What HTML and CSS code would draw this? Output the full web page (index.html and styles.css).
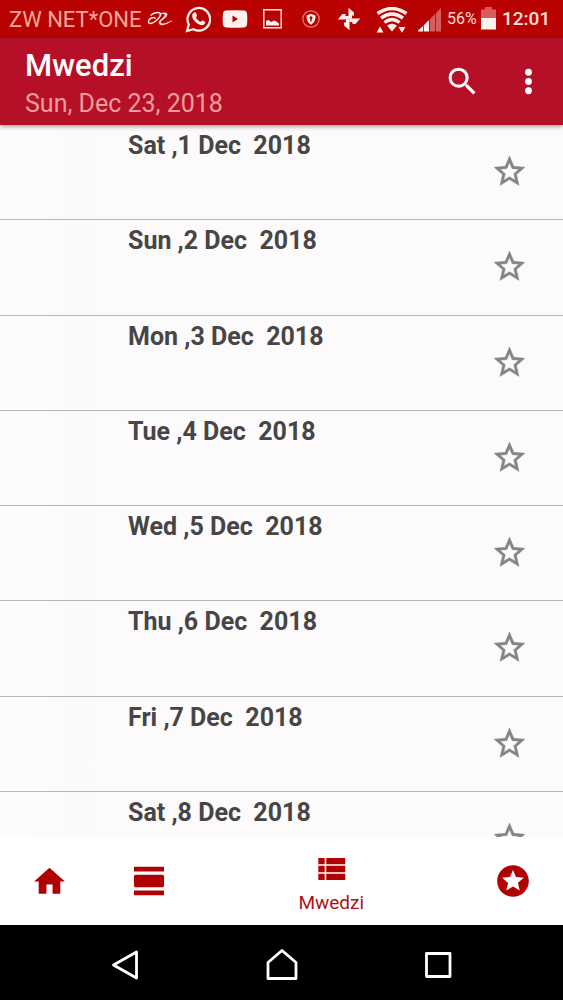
FILE: index.html
```html
<!DOCTYPE html>
<html lang="sn">
<head>
    <meta charset="UTF-8">
    <meta name="viewport" content="width=device-width, initial-scale=1.0">
    <title>Mwedzi</title>
    <link rel="stylesheet" href="styles.css">
</head>
<body>
    <div class="status-bar">
        <span class="carrier">ZW NET*ONE</span>
        <svg class="icon-alibaba" width="26" height="16" viewBox="0 0 26 16">
            <path d="M3.500 4.500C8 .5 14.500.5 13.500 4C12.500 7.500 7 12.500 3.500 12.500C0 12.500 1.500 8 4.500 7C6.500 6.300 8.500 6.500 8 8" fill="none" stroke="currentColor" stroke-width="1.400"/>
            <path d="M12.500 3.500C16 1 21 1 20 4.200C19 7.500 13.500 9 13.500 11.500C14 14 20 12.500 25 9.500C20 13.800 12.500 15.500 12 12C12 9 17 7 17.800 4.300C18.200 2.500 15 2.500 12.500 3.500Z" fill="currentColor" stroke="currentColor" stroke-width=".4"/>
        </svg>
        <svg class="icon-whatsapp" width="26" height="28" viewBox="0 0 26 28">
            <path d="M2 26L3.800 19.500A11.300 11.300 0 1 1 8.400 24.200Z" fill="none" stroke="currentColor" stroke-width="2.200"/>
            <path d="M8.500 8C9.500 7 10.500 7 11 8L12 10.300C12.200 11 11 12 11 12.500C12 14.500 13.500 16 15.300 16.800C16 17 16.800 15.300 17.500 15.500L20 16.700C20.500 17 20 18.600 19.300 19.300C17.500 21 14.500 20 12 18.300C9.500 16.500 7.500 13.500 7.200 11.500C7 10 7.500 8.800 8.500 8Z" fill="currentColor"/>
        </svg>
        <svg class="icon-video" width="26" height="18" viewBox="0 0 26 18">
            <path fill-rule="evenodd" d="M4 .6Q13-.2 22 .6Q24.800.8 25.100 4Q25.500 9 25.100 14Q24.800 17.200 22 17.400Q13 18.200 4 17.400Q1.200 17.200.9 14Q.5 9 .9 4Q1.200.8 4 .6ZM10.500 5.500V12.500L16 9Z" fill="currentColor"/>
        </svg>
        <svg class="icon-picture" width="19" height="20" viewBox="0 0 19 20">
            <rect x=".8" y=".8" width="17.400" height="18" fill="none" stroke="currentColor" stroke-width="1.400"/>
            <path d="M3 16.500V12L5.500 11L8 13L11 11.500L13.500 12.500L16 14.500V16.500Z" fill="currentColor"/>
        </svg>
        <svg class="icon-shield" width="18" height="18" viewBox="0 0 18 18">
            <circle cx="9" cy="9" r="8.200" fill="none" stroke="#ef7a70" stroke-width="1.200"/>
            <path d="M9 3.800L13.500 5.500C13.700 9.500 12.500 12.500 9 14.700C5.500 12.500 4.300 9.500 4.500 5.500Z" fill="currentColor"/>
            <path d="M9 6.300A1.600 1.600 0 0 1 9.700 9.300V11.500H8.300V9.300A1.600 1.600 0 0 1 9 6.300Z" fill="#b90303"/>
        </svg>
        <svg class="icon-pinwheel" width="24" height="24" viewBox="0 0 24 24">
            <g fill="currentColor">
                <path d="M11.500 11.800V.8L17 5.500V8.500H15V11.800Z"/>
                <path d="M11.500 11.800V.8L17 5.500V8.500H15V11.800Z" transform="rotate(90 12 12)"/>
                <path d="M11.500 11.800V.8L17 5.500V8.500H15V11.800Z" transform="rotate(180 12 12)"/>
                <path d="M11.500 11.800V.8L17 5.500V8.500H15V11.800Z" transform="rotate(270 12 12)"/>
            </g>
        </svg>
        <svg class="icon-wifi" width="32" height="26" viewBox="0 0 32 26">
            <g fill="none" stroke="currentColor" stroke-width="3.400">
                <path d="M1.500 6.500Q16-3.500 30.500 6.500"/>
                <path d="M5 11Q16 3.200 27 11"/>
                <path d="M8.500 15.500Q16 9.700 23.500 15.500"/>
            </g>
            <path d="M11 18.500Q16 15 21 18.500L16 24.500ZM.5 25.500L4 19.500L7.500 25.500ZM22.500 20H29.500L26 25.800Z" fill="currentColor"/>
        </svg>
        <svg class="icon-signal" width="24" height="24" viewBox="0 0 24 24">
            <path d="M0 23.500V22.500L5 18V23.500ZM5.800 23.500V17.200L11 12V23.500Z" fill="currentColor"/>
            <path d="M11.800 23.500V11.200L17 6V23.500ZM17.800 23.500V5.200L23 0V23.500Z" fill="#d95c5c"/>
        </svg>
        <span class="percent">56%</span>
        <svg class="icon-battery" width="15" height="23" viewBox="0 0 15 23">
            <path d="M0 2.500H4V0H11V2.500H15V11H0Z" fill="#d95c5c"/>
            <path d="M0 11H15V22.500H0Z" fill="currentColor"/>
        </svg>
        <span class="clock">12:01</span>
    </div>

    <header>
        <div class="titles">
            <h1>Mwedzi</h1>
            <p>Sun, Dec 23, 2018</p>
        </div>
        <svg class="search" width="37" height="37" viewBox="0 0 24 24">
            <path d="M15.500 14h-.79l-.28-.27A6.471 6.471 0 0 0 16 9.500 6.500 6.500 0 1 0 9.500 16c1.610 0 3.090-.59 4.230-1.570l.27.28v.79l5 4.990L20.490 19l-4.990-5zm-6 0C7.010 14 5 11.990 5 9.500S7.010 5 9.500 5 14 7.010 14 9.500 11.990 14 9.500 14z"/>
        </svg>
        <svg class="more" width="37" height="37" viewBox="0 0 24 24">
            <circle cx="12" cy="6" r="2.200"/>
            <circle cx="12" cy="12" r="2.200"/>
            <circle cx="12" cy="18" r="2.200"/>
        </svg>
    </header>

    <main id="days" class="days"></main>

    <nav class="tabs">
        <a>
            <svg width="37" height="37" viewBox="0 0 24 24"><path d="M10 20v-6h4v6h5v-8h3L12 3 2 12h3v8z"/></svg>
        </a>
        <a>
            <svg width="38" height="38" viewBox="0 0 24 24"><path d="M2.500 21h19v-3h-19zM20.500 8h-17c-.55 0-1 .45-1 1v6c0 .55.45 1 1 1h17c.55 0 1-.45 1-1V9c0-.55-.45-1-1-1zM2.500 3v3h19V3z"/></svg>
        </a>
        <a class="active">
            <svg width="38" height="38" viewBox="0 0 24 24"><path d="M4 14h4v-4H4v4zm0 5h4v-4H4v4zm0-10h4V5H4v4zm5 5h12v-4H9v4zm0 5h12v-4H9v4zM9 5v4h12V5H9z"/></svg>
            <span>Mwedzi</span>
        </a>
        <a>
            <svg width="38" height="38" viewBox="0 0 24 24"><path d="M11.990 2C6.470 2 2 6.480 2 12s4.470 10 9.990 10C17.520 22 22 17.520 22 12S17.520 2 11.990 2zm4.240 16L12 15.450 7.770 18l1.120-4.810-3.730-3.230 4.920-.42L12 5l1.920 4.530 4.920.42-3.730 3.230L16.230 18z"/></svg>
        </a>
    </nav>

    <div class="system-nav">
        <svg width="32" height="32" viewBox="0 0 32 32"><path d="M4.500 16L27.500 3V29Z"/></svg>
        <svg width="32" height="32" viewBox="0 0 32 32"><path d="M2 13.500L16 1.500L30 13.500V29.500H2Z"/></svg>
        <svg width="32" height="32" viewBox="0 0 32 32"><path d="M4.500 4.500H28V27.500H4.500Z"/></svg>
    </div>

    <script>
        const dias = ["Sat", "Sun", "Mon", "Tue", "Wed", "Thu", "Fri", "Sat"];
        const lista = document.getElementById("days");

        dias.forEach((dia, index) => {
            const div = document.createElement("div");
            div.classList.add("day");
            div.innerHTML = `
                <h2>${dia} ,${index + 1} Dec  2018</h2>
                <svg width="37" height="37" viewBox="0 0 24 24">
                    <path d="M22 9.240l-7.190-.62L12 2 9.190 8.630 2 9.240l5.460 4.730L5.820 21 12 17.270 18.180 21l-1.630-7.030L22 9.240zM12 15.400l-3.760 2.270 1-4.280-3.320-2.880 4.380-.38L12 6.100l1.710 4.040 4.380.38-3.320 2.880 1 4.280L12 15.400z"/>
                </svg>
            `;
            lista.appendChild(div);
        });
    </script>
</body>
</html>
```
FILE: styles.css
```css
* {
    box-sizing: border-box;
}
body {
    font-family: Roboto, "Noto Sans", sans-serif;
    margin: 0;
    height: 1000px;
    display: flex;
    flex-direction: column;
    overflow: hidden;
    background-color: #fcfafb;
}
h1, h2, p {
    margin: 0;
}
svg {
    display: block;
    flex-shrink: 0;
}

/* Status bar */
.status-bar {
    height: 38px;
    flex-shrink: 0;
    display: flex;
    align-items: flex-start;
    padding-left: 9px;
    background-color: #b90303;
    color: #fff1ee;
    white-space: nowrap;
}
.carrier {
    width: 138px;
    font-size: 22px;
    line-height: 26px;
    margin-top: 7px;
    color: #f7a79c;
}
.icon-alibaba {
    margin-top: 11px;
}
.icon-whatsapp {
    margin: 5px 0 0 12px;
}
.icon-video {
    margin: 10px 0 0 11px;
}
.icon-picture {
    margin: 9px 0 0 15px;
}
.icon-shield {
    margin: 10px 0 0 20px;
}
.icon-pinwheel {
    margin: 7px 0 0 17px;
}
.icon-wifi {
    margin: 7px 0 0 15px;
}
.icon-signal {
    margin: 8px 0 0 10px;
}
.percent {
    width: 34px;
    margin: 9px 0 0 5px;
    font-size: 16px;
    line-height: 20px;
    color: #ffd9d4;
}
.icon-battery {
    margin-top: 7px;
}
.clock {
    margin: 7px 0 0 6px;
    font-size: 19px;
    font-weight: 500;
    line-height: 24px;
    color: #ffe0dc;
}

/* App bar */
header {
    position: relative;
    height: 87px;
    flex-shrink: 0;
    display: flex;
    align-items: center;
    padding: 0 16px 0 25px;
    background-color: #b51027;
    box-shadow: 0 1px 5px rgba(0, 0, 0, 0.45);
    fill: #fff;
}
.titles {
    flex: 1;
    padding-top: 6px;
    white-space: nowrap;
}
h1 {
    font-size: 31px;
    font-weight: 500;
    line-height: 38px;
    color: #fff;
}
header p {
    font-size: 25px;
    line-height: 37px;
    color: #f19c9c;
}
.search {
    margin-right: 29px;
}

/* Day list */
.days {
    flex: 1;
    min-height: 0;
    overflow: hidden;
    background: linear-gradient(to right, #fbfdfb, #fcfafb 90px);
}
.day {
    height: 95.25px;
    display: flex;
    justify-content: space-between;
    padding: 0 35px 0 128px;
    border-bottom: 1px solid #b9b7b8;
}
.day h2 {
    font-size: 25px;
    font-weight: bold;
    line-height: 30px;
    margin-top: 6px;
    color: #474546;
    white-space: pre;
}
.day svg {
    margin-top: 28px;
    fill: #858384;
    stroke: #858384;
    stroke-width: 0.3;
}

/* Bottom tabs */
.tabs {
    height: 88px;
    flex-shrink: 0;
    display: grid;
    grid-template-columns: 99.5px 99.5px 1fr 99.5px;
    background-color: #fff;
    fill: #b00004;
}
.tabs a {
    display: flex;
    flex-direction: column;
    align-items: center;
    justify-content: center;
}
.tabs .active {
    padding-top: 2px;
}
.tabs span {
    font-size: 19px;
    line-height: 22px;
    margin-top: 4px;
    color: #ac1219;
}

/* Android buttons */
.system-nav {
    height: 75px;
    flex-shrink: 0;
    display: grid;
    grid-template-columns: repeat(3, 156.5px);
    justify-content: center;
    justify-items: center;
    padding-top: 24px;
    background-color: #000;
    fill: none;
    stroke: #fff;
    stroke-width: 2.800;
    stroke-linejoin: round;
}
```
